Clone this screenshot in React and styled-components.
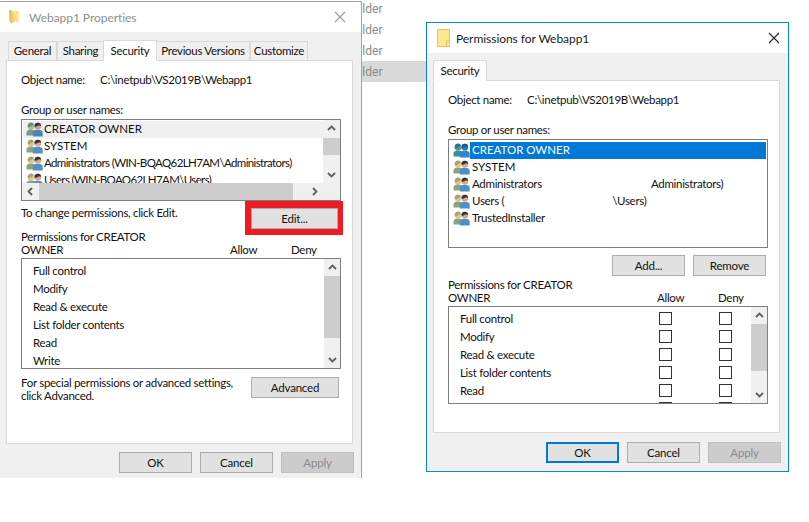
import React from "react";
import styled, { createGlobalStyle } from "styled-components";

const Global = createGlobalStyle`
  html, body { margin: 0; padding: 0; background: #fff; }
  body { width: 809px; height: 522px; overflow: hidden; font-family: Lato, "Liberation Sans", sans-serif; font-size: 11.5px; letter-spacing: -0.3px; color: #111; }
`;

const Desktop = styled.div`
  position: relative;
  width: 809px;
  height: 522px;
  overflow: hidden;
`;

const Explorer = styled.div`
  position: absolute;
  left: 349px;
  top: -2px;
  width: 77px;
  display: flex;
  flex-direction: column;
`;

const ExplorerRow = styled.div`
  height: 21px;
  line-height: 22px;
  font-family: Roboto, sans-serif;
  font-size: 12px;
  letter-spacing: 0;
  color: #8a8a8a;
  background: ${p => (p.$selected ? "#d9d9d9" : "transparent")};
`;

const Window = styled.div`
  position: absolute;
  left: ${p => p.$x}px;
  top: ${p => p.$y}px;
  width: ${p => p.$w}px;
  height: ${p => p.$h}px;
  box-sizing: border-box;
  background: #f0f0f0;
  border: 1px solid ${p => (p.$active ? "#0a84e0" : "#a3a3a3")};
  ${p => p.$flush && "border-left: none; border-bottom: none;"}
  display: flex;
  flex-direction: column;
`;

const TitleBar = styled.div`
  height: 30px;
  flex: none;
  background: #fff;
  display: flex;
  align-items: center;
  padding-left: ${p => p.$pad}px;
  gap: ${p => p.$gap}px;
`;

const TitleText = styled.span`
  flex: 1;
  font-size: 12px;
  letter-spacing: -0.05px;
  color: ${p => (p.$dim ? "#8f8f8f" : "#1a1a1a")};
`;

const CloseBox = styled.div`
  width: 46px;
  height: 100%;
  display: flex;
  align-items: center;
  justify-content: center;
  margin-right: ${p => p.$mr}px;
`;

const Content = styled.div`
  flex: 1;
  display: flex;
  flex-direction: column;
  padding-left: 6px;
  min-height: 0;
`;

const TabRow = styled.div`
  display: flex;
  align-items: flex-end;
  height: ${p => p.$h}px;
  padding-left: ${p => p.$pad}px;
  position: relative;
  z-index: 1;
`;

const Tab = styled.div`
  box-sizing: border-box;
  width: ${p => p.$w}px;
  height: ${p => (p.$active ? 21 : 19)}px;
  margin-right: ${p => (p.$active && p.$shift ? -1 : 0)}px;
  margin-left: ${p => (p.$shift ? -1 : 0)}px;
  background: ${p => (p.$active ? "#fff" : "#f0f0f0")};
  border: 1px solid #d9d9d9;
  border-bottom: ${p => (p.$active ? "1px solid #fff" : "none")};
  display: flex;
  align-items: center;
  justify-content: center;
  white-space: nowrap;
  line-height: 1;
  margin-bottom: ${p => (p.$active ? -1 : 0)}px;
  position: relative;
  z-index: ${p => (p.$active ? 2 : 0)};
`;

const Panel = styled.div`
  box-sizing: border-box;
  flex: none;
  width: 347px;
  height: ${p => p.$h}px;
  background: #fff;
  border: 1px solid #d9d9d9;
  padding: 0 10px 0 14px;
  display: flex;
  flex-direction: column;
`;

const ObjectLine = styled.div`
  display: flex;
  height: 16px;
  line-height: 16px;
  margin-top: 11px;
`;

const ObjectLabel = styled.span`
  width: 79px;
  flex: none;
`;

const Label = styled.div`
  height: 16px;
  line-height: 16px;
  margin-top: 14px;
`;

const ListBox = styled.div`
  box-sizing: border-box;
  flex: none;
  width: 320px;
  height: ${p => p.$h}px;
  margin-top: ${p => p.$mt}px;
  border: 1px solid #7f7f7f;
  background: #fff;
  display: grid;
  grid-template-columns: minmax(0, 1fr) ${p => p.$vscroll || 0}px;
  grid-template-rows: minmax(0, 1fr) ${p => (p.$hscroll ? "17px" : "0")};
  overflow: hidden;
`;

const Rows = styled.div`
  padding: ${p => p.$pad};
  overflow: hidden;
  min-width: 0;
  min-height: 0;
`;

const UserRow = styled.div`
  height: 17px;
  display: flex;
  align-items: center;
  white-space: nowrap;
  padding-left: 3px;
  background: ${p => (p.$soft ? "#f0f0f0" : "transparent")};
`;

const UserName = styled.span`
  flex: 1;
  align-self: stretch;
  box-sizing: border-box;
  display: flex;
  align-items: center;
  padding-left: ${p => p.$pad}px;
  padding-bottom: 2px;
  letter-spacing: ${p => p.$spacing ?? -0.3}px;
  color: ${p => (p.$selected ? "#fff" : "inherit")};
  background: ${p => (p.$selected ? "#0078d7" : "transparent")};
`;

const Masked = styled.span`
  display: inline-block;
  width: ${p => p.$w}px;
`;

const VTrack = styled.div`
  background: #f0f0f0;
  display: flex;
  flex-direction: column;
  align-items: center;
  justify-content: space-between;
  position: relative;
  height: 100%;
`;

const ArrowCell = styled.div`
  height: 17px;
  width: 100%;
  flex: none;
  display: flex;
  align-items: center;
  justify-content: center;
`;

const VThumb = styled.div`
  position: absolute;
  left: 0;
  right: 0;
  top: ${p => p.$top}px;
  height: ${p => p.$h}px;
  background: #cdcdcd;
`;

const HTrack = styled.div`
  grid-column: 1 / span 2;
  background: #f0f0f0;
  display: flex;
  align-items: center;
  padding-right: 17px;
`;

const HThumb = styled.div`
  flex: 1;
  height: 100%;
  background: #cdcdcd;
  margin-right: 13px;
`;

const ArrowH = styled.div`
  width: 17px;
  height: 100%;
  flex: none;
  display: flex;
  align-items: center;
  justify-content: center;
`;

const ActionRow = styled.div`
  display: flex;
  justify-content: space-between;
  align-items: flex-start;
  margin-top: ${p => p.$mt}px;
  width: 318px;
  flex: none;
`;

const RightButtons = styled.div`
  display: flex;
  justify-content: flex-end;
  gap: 8px;
  width: 318px;
  margin-top: 7px;
`;

const Hint = styled.div`
  line-height: 13px;
  margin-top: ${p => p.$mt}px;
  white-space: nowrap;
`;

const Button = styled.button`
  box-sizing: border-box;
  flex: none;
  width: ${p => p.$w}px;
  height: 21px;
  padding: 0;
  font: inherit;
  letter-spacing: -0.2px;
  color: ${p => (p.$disabled ? "#8c8c8c" : "#111")};
  background: ${p => (p.$disabled ? "#cccccc" : "#e1e1e1")};
  border: ${p => (p.$default ? "2px solid #0078d7" : `1px solid ${p.$disabled ? "#bfbfbf" : "#adadad"}`)};
`;

const Highlight = styled.div`
  box-sizing: border-box;
  flex: none;
  border-style: solid;
  border-color: #ed1c24;
  border-width: 7px 5px 6px 6px;
  width: 98px;
  height: 34px;
  margin: -5px -4px 0 0;
  display: flex;
  position: relative;
`;

const PermHead = styled.div`
  display: grid;
  grid-template-columns: 209px 61px 1fr;
  width: 320px;
  line-height: 13px;
  margin-top: ${p => p.$mt}px;
  align-items: end;
  flex: none;
`;

const PermName = styled.span`
  white-space: nowrap;
`;

const PermCol = styled.div`
  height: 13px;
  line-height: 13px;
`;

const PermRow = styled.div`
  height: 18px;
  display: grid;
  grid-template-columns: minmax(0, 1fr) 13px 47px 13px 19px;
  align-items: center;
  padding-left: 11px;
  white-space: nowrap;
`;

const Check = styled.div`
  box-sizing: border-box;
  width: 13px;
  height: 13px;
  border: 1px solid #333;
  background: #fff;
  grid-column: ${p => p.$col};
`;

const Footer = styled.div`
  display: flex;
  justify-content: flex-end;
  gap: 8px;
  width: 348px;
  margin-top: ${p => p.$mt}px;
`;

const IconSvg = styled.svg`
  flex: none;
`;

const UsersIcon = ({ blue, muted }) => {
  const c = blue
    ? { h1: "#4d97a5", t1: "#2c7482", s1: "#3a8f9c", h2: "#2f78a8", t2: "#1f5a85", s2: "#2f86c8" }
    : muted
    ? { h1: "#a9b8a0", t1: "#6f8a72", s1: "#7c9c82", h2: "#c99f85", t2: "#2f3a45", s2: "#4a86bc" }
    : { h1: "#dcc69a", t1: "#a9a26a", s1: "#8aa578", h2: "#dba984", t2: "#33333a", s2: "#4f90c8" };
  return (
    <IconSvg width="17" height="15" viewBox="0 0 17 15">
      <circle cx="5" cy="4.2" r="3.4" fill={c.h1} />
      <path d="M1.8 4.6a3.2 3.6 0 0 1 6-2.2L3 5.6z" fill={c.t1} />
      <path d="M0.5 13.5v-3c0-2 1.6-3 4.5-3s4.5 1 4.5 3v3z" fill={c.s1} />
      <circle cx="11.8" cy="4.2" r="3.4" fill={c.h2} />
      <path d="M8.5 4.6a3.3 3.6 0 0 1 6.6-.6l-2.2-.8-2.8 1.6z" fill={c.t2} />
      <path d="M6.8 14.5v-3.8c0-2 1.8-3 5-3s4.9 1 4.9 3v3.8z" fill={c.s2} />
    </IconSvg>
  );
};

const Chevron = ({ dir }) => {
  const d = {
    up: "M1 6 L4.5 2.5 L8 6",
    down: "M1 3 L4.5 6.5 L8 3",
    left: "M6 1 L2.5 4.5 L6 8",
    right: "M3 1 L6.5 4.5 L3 8",
  }[dir];
  return (
    <svg width="9" height="9" viewBox="0 0 9 9">
      <path d={d} fill="none" stroke="#5f5f5f" strokeWidth="1.8" />
    </svg>
  );
};

const CloseIcon = ({ color }) => (
  <svg width="12" height="12" viewBox="0 0 12 12">
    <path d="M1 1 L11 11 M11 1 L1 11" stroke={color} strokeWidth="1.1" />
  </svg>
);

const FolderLarge = () => (
  <IconSvg width="13" height="18" viewBox="0 0 13 18">
    <path d="M0.5 0.5H12.5V17.5H0.5Z" fill="#fde68f" stroke="#e9c25c" />
    <path d="M9.5 12V17M9.5 12H12.5" stroke="#e9c25c" fill="none" />
  </IconSvg>
);

const FolderSmall = () => (
  <IconSvg width="10" height="16" viewBox="0 0 10 16">
    <path d="M0 1H2.5L3 2.5V15L0.5 13Z" fill="#e8bd50" />
    <path d="M2.5 2H9.5V13H3Z" fill="#fcdf86" />
    <path d="M2.5 14.5L2.5 4L5 5V13Z" fill="#f4cf6a" />
  </IconSvg>
);

const VScroll = ({ top, h }) => (
  <VTrack>
    <ArrowCell><Chevron dir="up" /></ArrowCell>
    <VThumb $top={top} $h={h} />
    <ArrowCell><Chevron dir="down" /></ArrowCell>
  </VTrack>
);

const leftUsers = [
  { name: "CREATOR OWNER", spacing: 0, muted: true },
  { name: "SYSTEM", spacing: 0 },
  { name: "Administrators (WIN-BQAQ62LH7AM\\Administrators)", spacing: -0.62 },
  { name: "Users (WIN-BQAQ62LH7AM\\Users)", spacing: -0.62 },
];

const perms = ["Full control", "Modify", "Read & execute", "List folder contents", "Read", "Write"];

const PermHeader = ({ mt }) => (
  <PermHead $mt={mt}>
    <PermName>Permissions for CREATOR<br />OWNER</PermName>
    <PermCol>Allow</PermCol>
    <PermCol>Deny</PermCol>
  </PermHead>
);

const DialogFooter = ({ isDefault }) => (
  <Footer $mt={isDefault ? 9 : 8}>
    <Button $w={73} $default={isDefault}>OK</Button>
    <Button $w={73}>Cancel</Button>
    <Button $w={73} $disabled>Apply</Button>
  </Footer>
);

const ObjectName = () => (
  <ObjectLine>
    <ObjectLabel>Object name:</ObjectLabel>
    <span>C:\inetpub\VS2019B\Webapp1</span>
  </ObjectLine>
);

export default function App() {
  return (
    <Desktop>
      <Global />
      <Explorer>
        <ExplorerRow>Folder</ExplorerRow>
        <ExplorerRow>Folder</ExplorerRow>
        <ExplorerRow>Folder</ExplorerRow>
        <ExplorerRow $selected>Folder</ExplorerRow>
      </Explorer>

      <Window $x={0} $y={1} $w={362} $h={477} $flush>
        <TitleBar $pad={9} $gap={10}>
          <FolderSmall />
          <TitleText $dim>Webapp1 Properties</TitleText>
          <CloseBox $mr={-2}><CloseIcon color="#9a9a9a" /></CloseBox>
        </TitleBar>
        <Content>
          <TabRow $h={28} $pad={2}>
            <Tab $w={49}>General</Tab>
            <Tab $w={47}>Sharing</Tab>
            <Tab $w={54} $active $shift>Security</Tab>
            <Tab $w={94}>Previous Versions</Tab>
            <Tab $w={58}>Customize</Tab>
          </TabRow>
          <Panel $h={384}>
            <ObjectName />
            <Label>Group or user names:</Label>
            <ListBox $h={82} $mt={1} $vscroll={17} $hscroll>
              <Rows $pad="1px 0 0 1px">
                {leftUsers.map((u, i) => (
                  <UserRow key={u.name} $soft={i === 0}>
                    <UsersIcon muted={u.muted} />
                    <UserName $pad={1} $spacing={u.spacing}>{u.name}</UserName>
                  </UserRow>
                ))}
              </Rows>
              <VScroll top={18} h={17} />
              <HTrack>
                <ArrowH><Chevron dir="left" /></ArrowH>
                <HThumb />
                <ArrowH><Chevron dir="right" /></ArrowH>
              </HTrack>
            </ListBox>
            <ActionRow $mt={5}>
              <Hint $mt={0}>To change permissions, click Edit.</Hint>
              <Highlight>
                <Button $w={87}>Edit...</Button>
              </Highlight>
            </ActionRow>
            <PermHeader mt={-5} />
            <ListBox $h={111} $mt={2} $vscroll={16}>
              <Rows $pad="2px 0 0 0">
                {perms.map(p => <PermRow key={p}>{p}</PermRow>)}
              </Rows>
              <VScroll top={17} h={62} />
            </ListBox>
            <ActionRow $mt={8}>
              <Hint $mt={-1}>For special permissions or advanced settings,<br />click Advanced.</Hint>
              <Button $w={88}>Advanced</Button>
            </ActionRow>
          </Panel>
          <DialogFooter />
        </Content>
      </Window>

      <Window $x={426} $y={22} $w={363} $h={450} $active>
        <TitleBar $pad={10} $gap={6}>
          <FolderLarge />
          <TitleText>Permissions for Webapp1</TitleText>
          <CloseBox $mr={-9}><CloseIcon color="#222" /></CloseBox>
        </TitleBar>
        <Content>
          <TabRow $h={27} $pad={0}>
            <Tab $w={54} $active>Security</Tab>
          </TabRow>
          <Panel $h={353}>
            <ObjectName />
            <Label>Group or user names:</Label>
            <ListBox $h={109} $mt={1}>
              <Rows $pad="2px 1px 0 1px">
                <UserRow><UsersIcon blue /><UserName $pad={2} $selected $spacing={0}>CREATOR OWNER</UserName></UserRow>
                <UserRow><UsersIcon /><UserName $pad={2} $spacing={0}>SYSTEM</UserName></UserRow>
                <UserRow><UsersIcon /><UserName $pad={2}>Administrators<Masked $w={109} />Administrators)</UserName></UserRow>
                <UserRow><UsersIcon /><UserName $pad={2}>Users (<Masked $w={108} />\Users)</UserName></UserRow>
                <UserRow><UsersIcon /><UserName $pad={2}>TrustedInstaller</UserName></UserRow>
              </Rows>
            </ListBox>
            <RightButtons>
              <Button $w={73}>Add...</Button>
              <Button $w={73}>Remove</Button>
            </RightButtons>
            <PermHeader mt={2} />
            <ListBox $h={98} $mt={2} $vscroll={16}>
              <Rows $pad="2px 0 0 0">
                {perms.map(p => (
                  <PermRow key={p}>
                    {p === "Write" ? <span /> : p}
                    <Check $col={2} />
                    <Check $col={4} />
                  </PermRow>
                ))}
              </Rows>
              <VScroll top={17} h={47} />
            </ListBox>
          </Panel>
          <DialogFooter isDefault />
        </Content>
      </Window>
    </Desktop>
  );
}
